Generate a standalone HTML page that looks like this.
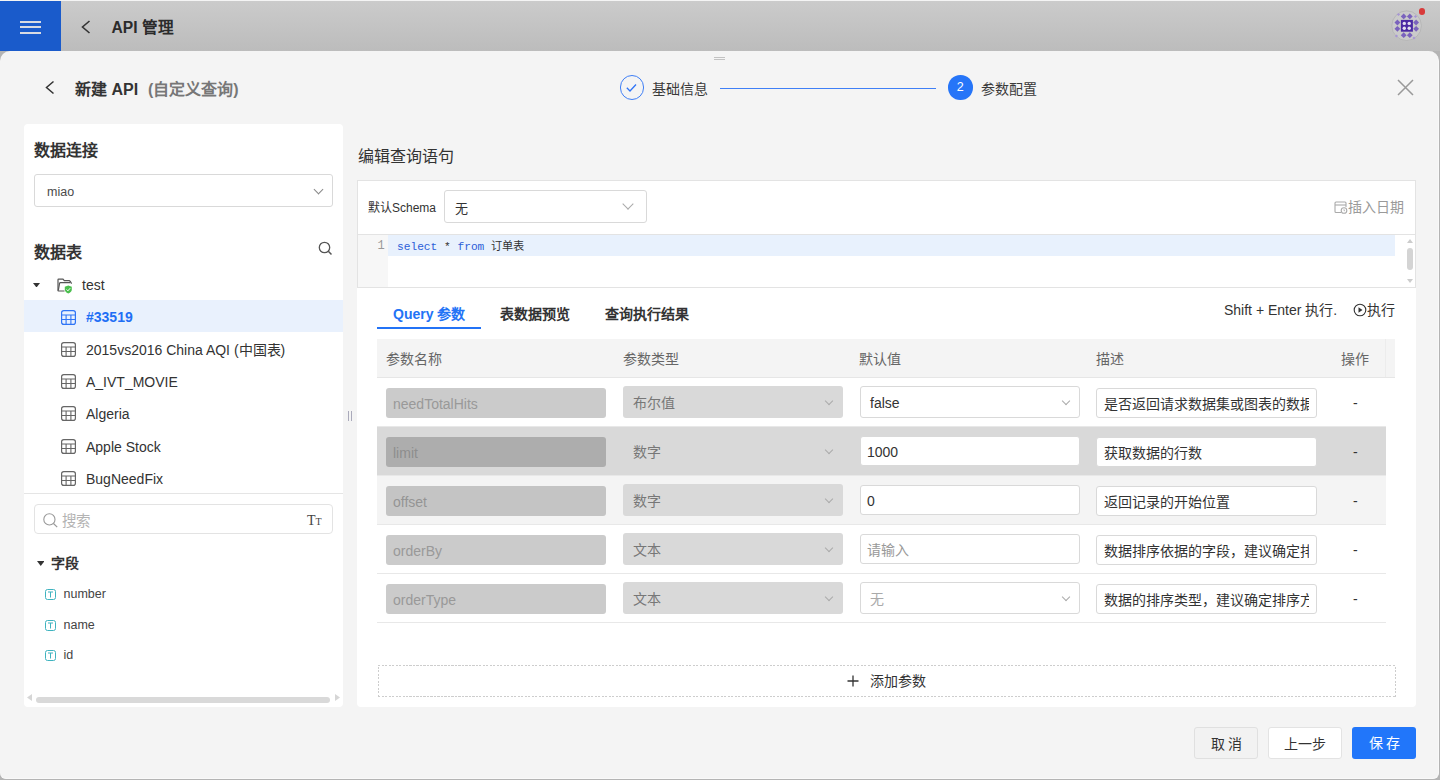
<!DOCTYPE html>
<html lang="zh-CN"><head><meta charset="utf-8">
<style>
*{box-sizing:border-box;margin:0;padding:0}
html,body{width:1440px;height:780px;overflow:hidden}
body{position:relative;background:#b4b4b4;font-family:"Liberation Sans",sans-serif;color:#333;font-size:14px}
.a{position:absolute;white-space:nowrap}
#hdr{position:absolute;left:0;top:0;width:1440px;height:51px;background:linear-gradient(#cbcbcb,#bcbcbc);border-top:1px solid #f4f4f4}
#menu{position:absolute;left:0;top:0;width:61px;height:50px;background:#1a5bcb}
#menu i{position:absolute;left:20px;width:21px;height:2px;background:#d8dbe3}
#modal{position:absolute;left:0;top:51px;width:1439px;height:728px;background:#f4f4f4;border-radius:10px 10px 6px 6px;border-right:1px solid #f9f9f9;border-bottom:1px solid #f9f9f9}
.card{position:absolute;background:#fff;border-radius:4px}
.t16b{font-size:16px;font-weight:bold;line-height:20px}
.sel{position:absolute;border:1px solid #d9d9d9;border-radius:3px;background:#fff}
.chev{position:absolute;width:7px;height:7px;border-right:1.3px solid #888;border-bottom:1.3px solid #888;transform:rotate(45deg)}
.tbl-ico{position:absolute;width:14px;height:14px}
.row{position:absolute;left:378px;width:1008px;height:49px;border-bottom:1px solid #e8e8e8}
.inp{position:absolute;height:30px;border-radius:3px;font-size:14px;line-height:28px;padding-left:7px;border:1px solid #d9d9d9;background:#fff;color:#333;overflow:hidden}
</style></head><body>
<div id="hdr">
  <div id="menu"><i style="top:20px"></i><i style="top:25px"></i><i style="top:31px"></i></div>
  <svg class="a" style="left:80px;top:19px" width="12" height="14" viewBox="0 0 12 14"><path d="M9.5 1 L2.5 7 L9.5 13" fill="none" stroke="#333" stroke-width="1.6"/></svg>
  <div class="a" style="left:111.5px;top:16.5px;font-size:15.6px;font-weight:bold;line-height:20px;color:#2b2b2b">API 管理</div>
  <svg class="a" style="left:1391px;top:9px" width="32" height="32" viewBox="0 0 32 32"><circle cx="15.6" cy="15.7" r="14.8" fill="#cacaca" stroke="#b3b3b3" stroke-width="0.8"/><path d="M12.7 3.5 l2.9 2.9 l-2.9 2.9 l-2.9 -2.9 Z" fill="#7a62bd"/><path d="M18.8 3.5 l2.9 2.9 l-2.9 2.9 l-2.9 -2.9 Z" fill="#7a62bd"/><path d="M6.4 9.6 l2.9 2.9 l-2.9 2.9 l-2.9 -2.9 Z" fill="#7a62bd"/><path d="M6.4 15.9 l2.9 2.9 l-2.9 2.9 l-2.9 -2.9 Z" fill="#7a62bd"/><path d="M25.1 9.6 l2.9 2.9 l-2.9 2.9 l-2.9 -2.9 Z" fill="#7a62bd"/><path d="M25.1 15.9 l2.9 2.9 l-2.9 2.9 l-2.9 -2.9 Z" fill="#7a62bd"/><path d="M12.7 22.3 l2.9 2.9 l-2.9 2.9 l-2.9 -2.9 Z" fill="#7a62bd"/><path d="M18.8 22.3 l2.9 2.9 l-2.9 2.9 l-2.9 -2.9 Z" fill="#7a62bd"/><path d="M7.5 2.9 l1.6 1.6 l-1.6 1.6 l-1.6 -1.6 Z" fill="#a796d4"/><path d="M24.5 4.9 l1.6 1.6 l-1.6 1.6 l-1.6 -1.6 Z" fill="#a796d4"/><path d="M5.5 24.4 l1.6 1.6 l-1.6 1.6 l-1.6 -1.6 Z" fill="#a796d4"/><path d="M23.0 26.4 l1.6 1.6 l-1.6 1.6 l-1.6 -1.6 Z" fill="#a796d4"/><rect x="9.9" y="9.9" width="12" height="11.8" fill="#4b2aa3"/><circle cx="13.3" cy="13.4" r="1.7" fill="#e4e0f0"/><circle cx="18.2" cy="13.4" r="1.7" fill="#e4e0f0"/><circle cx="13.3" cy="18.3" r="1.7" fill="#e4e0f0"/><circle cx="18.2" cy="18.3" r="1.7" fill="#e4e0f0"/></svg><div class="a" style="left:1418.6px;top:7.4px;width:6.6px;height:6.6px;border-radius:50%;background:#d83a3a"></div>
</div><div id="modal">
  <div class="a" style="left:714px;top:5.5px;width:11px;height:1.2px;background:#c2c2c2"></div>
  <div class="a" style="left:714px;top:8px;width:11px;height:1.2px;background:#c2c2c2"></div>
  <svg class="a" style="left:44px;top:29px" width="12" height="15" viewBox="0 0 12 15"><path d="M9.5 1.5 L2.5 7.5 L9.5 13.5" fill="none" stroke="#333" stroke-width="1.5"/></svg>
  <div class="a t16b" style="left:75px;top:28.5px;color:#333">新建 API</div>
  <div class="a t16b" style="left:148px;top:28.5px;color:#777">(自定义查询)</div>
  <div class="a" style="left:619.5px;top:24px;width:24.5px;height:24.5px;border-radius:50%;border:1px solid #3f7ff6"></div>
  <svg class="a" style="left:619px;top:24px" width="25" height="25" viewBox="0 0 25 25"><path d="M7.8 12.8 L11 16 L17 9.5" fill="none" stroke="#2f74f6" stroke-width="1.3"/></svg>
  <div class="a" style="left:652px;top:28px;font-size:14px;line-height:20px;color:#3a3a3a">基础信息</div>
  <div class="a" style="left:720px;top:36.5px;width:216px;height:1.5px;background:#3f7ff6"></div>
  <div class="a" style="left:948px;top:24px;width:24.5px;height:24.5px;border-radius:50%;background:#2675f8;color:#fff;font-size:12.5px;line-height:25px;text-align:center">2</div>
  <div class="a" style="left:981px;top:28px;font-size:14px;line-height:20px;color:#3a3a3a">参数配置</div>
  <svg class="a" style="left:1397px;top:28px" width="17" height="17" viewBox="0 0 17 17"><path d="M1 1 L16 16 M16 1 L1 16" fill="none" stroke="#999" stroke-width="1.5"/></svg>
  <div class="card" style="left:24px;top:73px;width:319px;height:583px;overflow:hidden">
    <div class="a t16b" style="left:10px;top:17px;color:#333">数据连接</div>
    <div class="sel" style="left:10px;top:50px;width:299px;height:33px"></div>
    <div class="a" style="left:23px;top:59px;font-size:12.5px;line-height:18px;color:#4a4a4a">miao</div>
    <div class="chev" style="left:291px;top:62px"></div>
    <div class="a t16b" style="left:10px;top:119px;color:#333">数据表</div>
    <svg class="a" style="left:294px;top:117px" width="16" height="16" viewBox="0 0 16 16"><circle cx="6.5" cy="6.5" r="5.2" fill="none" stroke="#555" stroke-width="1.3"/><path d="M10.3 10.3 L13.5 13.5" stroke="#555" stroke-width="1.5"/></svg>
    <svg class="a" style="left:9.2px;top:158.8px" width="7" height="4.5" viewBox="0 0 7 4.5"><path d="M0 0 L7 0 L3.5 4.5 Z" fill="#333"/></svg>
    <svg class="a" style="left:33px;top:154px" width="16" height="16" viewBox="0 0 16 16"><path d="M1 4 V12.5 Q1 13 1.5 13 H7.5 M1 4 V1.8 Q1 1.2 1.6 1.2 H6 L7.3 2.6 H12 Q12.8 2.6 13.2 3.4 L14.6 5.6" fill="none" stroke="#555" stroke-width="1.2"/><path d="M1.3 12.5 L2.6 5.2 Q2.8 4.6 3.4 4.6 H13" fill="none" stroke="#555" stroke-width="1.2"/><path d="M11.3 7.6 L14.8 8.8 V11.8 Q14.8 14 11.3 15.6 Q7.8 14 7.8 11.8 V8.8 Z" fill="#4cbf4f"/><path d="M9.6 11.5 L10.9 12.8 L13.2 10.2" fill="none" stroke="#fff" stroke-width="1"/></svg>
    <div class="a" style="left:58px;top:151px;font-size:14px;line-height:20px;color:#333">test</div>
    <div class="a" style="left:0;top:176px;width:319px;height:32px;background:#e9f1fd"></div>
    <svg class="tbl-ico" style="left:37px;top:186px;width:15px;height:15px" width="15" height="15" viewBox="0 0 15 15"><rect x="0.6" y="0.6" width="13.8" height="13.8" rx="2.2" fill="none" stroke="#2f74f6" stroke-width="1.2"/><path d="M0.6 5 H14.4 M0.6 9.5 H14.4 M5.1 5 V14.4 M9.9 5 V14.4" stroke="#2f74f6" stroke-width="1.1"/></svg><div class="a" style="left:62px;top:183px;font-size:14px;line-height:20px;color:#1f6ff5;font-weight:bold">#33519</div>
<svg class="tbl-ico" style="left:37px;top:218px;width:15px;height:15px" width="15" height="15" viewBox="0 0 15 15"><rect x="0.6" y="0.6" width="13.8" height="13.8" rx="2.2" fill="none" stroke="#666" stroke-width="1.2"/><path d="M0.6 5 H14.4 M0.6 9.5 H14.4 M5.1 5 V14.4 M9.9 5 V14.4" stroke="#666" stroke-width="1.1"/></svg><div class="a" style="left:62px;top:216px;font-size:14px;line-height:20px;color:#333">2015vs2016 China AQI (中国表)</div>
<svg class="tbl-ico" style="left:37px;top:250px;width:15px;height:15px" width="15" height="15" viewBox="0 0 15 15"><rect x="0.6" y="0.6" width="13.8" height="13.8" rx="2.2" fill="none" stroke="#666" stroke-width="1.2"/><path d="M0.6 5 H14.4 M0.6 9.5 H14.4 M5.1 5 V14.4 M9.9 5 V14.4" stroke="#666" stroke-width="1.1"/></svg><div class="a" style="left:62px;top:248px;font-size:14px;line-height:20px;color:#333">A_IVT_MOVIE</div>
<svg class="tbl-ico" style="left:37px;top:282px;width:15px;height:15px" width="15" height="15" viewBox="0 0 15 15"><rect x="0.6" y="0.6" width="13.8" height="13.8" rx="2.2" fill="none" stroke="#666" stroke-width="1.2"/><path d="M0.6 5 H14.4 M0.6 9.5 H14.4 M5.1 5 V14.4 M9.9 5 V14.4" stroke="#666" stroke-width="1.1"/></svg><div class="a" style="left:62px;top:280px;font-size:14px;line-height:20px;color:#333">Algeria</div>
<svg class="tbl-ico" style="left:37px;top:315px;width:15px;height:15px" width="15" height="15" viewBox="0 0 15 15"><rect x="0.6" y="0.6" width="13.8" height="13.8" rx="2.2" fill="none" stroke="#666" stroke-width="1.2"/><path d="M0.6 5 H14.4 M0.6 9.5 H14.4 M5.1 5 V14.4 M9.9 5 V14.4" stroke="#666" stroke-width="1.1"/></svg><div class="a" style="left:62px;top:313px;font-size:14px;line-height:20px;color:#333">Apple Stock</div>
<svg class="tbl-ico" style="left:37px;top:347px;width:15px;height:15px" width="15" height="15" viewBox="0 0 15 15"><rect x="0.6" y="0.6" width="13.8" height="13.8" rx="2.2" fill="none" stroke="#666" stroke-width="1.2"/><path d="M0.6 5 H14.4 M0.6 9.5 H14.4 M5.1 5 V14.4 M9.9 5 V14.4" stroke="#666" stroke-width="1.1"/></svg><div class="a" style="left:62px;top:345px;font-size:14px;line-height:20px;color:#333">BugNeedFix</div>
<div class="a" style="left:0;top:369px;width:319px;height:1px;background:#e5e5e5"></div>
    <div class="sel" style="left:10px;top:380px;width:299px;height:30px;border-color:#e3e3e3;border-radius:4px"></div>
    <svg class="a" style="left:19px;top:389px" width="15" height="15" viewBox="0 0 15 15"><circle cx="6.4" cy="6.4" r="5.6" fill="none" stroke="#999" stroke-width="1.1"/><path d="M10.5 10.5 L14.2 14.2" stroke="#999" stroke-width="1.2"/></svg>
    <div class="a" style="left:38px;top:386.5px;font-size:14.5px;line-height:20px;color:#b3b3b3">搜索</div>
    <div class="a" style="left:283px;top:389px;font-family:'Liberation Serif',serif;font-size:14px;line-height:16px;color:#444">T<span style="font-size:10px">T</span></div>
    <svg class="a" style="left:12.5px;top:436.5px" width="7.5" height="5" viewBox="0 0 7.5 5"><path d="M0 0 L7.5 0 L3.75 5 Z" fill="#333"/></svg>
    <div class="a" style="left:26.5px;top:428.7px;font-size:14px;font-weight:bold;line-height:20px;color:#333">字段</div>
    <svg class="a" style="left:21px;top:465px" width="11" height="11" viewBox="0 0 11 11"><rect x="0.5" y="0.5" width="10" height="10" rx="2" fill="none" stroke="#3fb3bf" stroke-width="1"/><path d="M3 3 H8 M5.5 3 V8.5" stroke="#3fb3bf" stroke-width="1"/></svg><div class="a" style="left:39.5px;top:460.5px;font-size:12.5px;line-height:18px;color:#444">number</div>
<svg class="a" style="left:21px;top:496px" width="11" height="11" viewBox="0 0 11 11"><rect x="0.5" y="0.5" width="10" height="10" rx="2" fill="none" stroke="#3fb3bf" stroke-width="1"/><path d="M3 3 H8 M5.5 3 V8.5" stroke="#3fb3bf" stroke-width="1"/></svg><div class="a" style="left:39.5px;top:491.5px;font-size:12.5px;line-height:18px;color:#444">name</div>
<svg class="a" style="left:21px;top:526px" width="11" height="11" viewBox="0 0 11 11"><rect x="0.5" y="0.5" width="10" height="10" rx="2" fill="none" stroke="#3fb3bf" stroke-width="1"/><path d="M3 3 H8 M5.5 3 V8.5" stroke="#3fb3bf" stroke-width="1"/></svg><div class="a" style="left:39.5px;top:521.5px;font-size:12.5px;line-height:18px;color:#444">id</div>
<svg class="a" style="left:3px;top:570px" width="6" height="7" viewBox="0 0 6 7"><path d="M5 0 V7 L0 3.5 Z" fill="#d6d6d6"/></svg>
    <div class="a" style="left:12px;top:573px;width:294px;height:6px;border-radius:3px;background:#d9d9d9"></div>
    <svg class="a" style="left:311px;top:570px" width="6" height="7" viewBox="0 0 6 7"><path d="M0 0 V7 L5 3.5 Z" fill="#d6d6d6"/></svg>
  </div>
  <div class="a" style="left:348px;top:360px;width:1px;height:10px;background:#aab"></div>
  <div class="a" style="left:351px;top:360px;width:1px;height:10px;background:#aab"></div>
  <div class="a" style="left:358px;top:95px;font-size:16px;line-height:22px;color:#333">编辑查询语句</div><div class="card" style="left:357px;top:129px;width:1059px;height:527px"></div><div class="a" style="left:357px;top:129px;width:1059px;height:108px;border:1px solid #e3e3e3;background:#fff"></div><div class="a" style="left:358px;top:183px;width:1057px;height:1px;background:#e3e3e3"></div><div class="a" style="left:368px;top:149px;font-size:12px;line-height:16px;color:#333">默认Schema</div><div class="sel" style="left:444px;top:139px;width:203px;height:33px"></div><div class="a" style="left:455px;top:148.5px;font-size:13px;line-height:18px;color:#333">无</div><div class="chev" style="left:624px;top:149px;width:8px;height:8px;border-color:#aaa;border-width:0 1px 1px 0"></div><svg class="a" style="left:1334px;top:149px" width="14" height="14" viewBox="0 0 14 14"><path d="M7 12.5 H2 Q1 12.5 1 11.5 V3 Q1 2 2 2 H11 Q12 2 12 3 V7" fill="none" stroke="#aaa" stroke-width="1.1"/><path d="M1 5 H12" stroke="#aaa" stroke-width="1.1"/><circle cx="10" cy="10.5" r="2.8" fill="#fff" stroke="#aaa" stroke-width="1.1"/><path d="M10 9.2 V10.7 H11" fill="none" stroke="#aaa" stroke-width="0.8"/></svg><div class="a" style="left:1348px;top:146px;font-size:14px;line-height:20px;color:#9a9a9a">插入日期</div><div class="a" style="left:358px;top:184px;width:30px;height:52px;background:#f7f7f7"></div><div class="a" style="left:388px;top:184px;width:1007px;height:21px;background:#e8f1fd"></div><div class="a" style="left:377.5px;top:187px;font-family:'Liberation Mono',monospace;font-size:12px;line-height:16px;color:#999">1</div><div class="a" style="left:397px;top:187.5px;font-family:'Liberation Mono',monospace;font-size:11.2px;line-height:16px;color:#333"><span style="color:#2c5fd8">select</span> * <span style="color:#2c5fd8">from</span> 订单表</div><svg class="a" style="left:1406px;top:184px" width="8" height="50" viewBox="0 0 8 50"><path d="M1 8 L4 4 L7 8 Z" fill="#ccc"/><rect x="1" y="13" width="6" height="22" rx="3" fill="#d4d4d4"/><path d="M1 44 L4 48 L7 44 Z" fill="#ccc"/></svg><div class="a" style="left:377px;top:276px;width:104px;height:2px;background:#2373f6"></div><div class="a" style="left:393px;top:253px;font-size:14px;font-weight:bold;line-height:20px;color:#2373f6">Query 参数</div><div class="a" style="left:500px;top:253px;font-size:14px;font-weight:bold;line-height:20px;color:#333">表数据预览</div><div class="a" style="left:605px;top:253px;font-size:14px;font-weight:bold;line-height:20px;color:#333">查询执行结果</div><div class="a" style="left:1224px;top:249px;font-size:14px;line-height:20px;color:#333">Shift + Enter 执行.</div><svg class="a" style="left:1353px;top:252px" width="14" height="14" viewBox="0 0 14 14"><circle cx="7" cy="7" r="5.8" fill="none" stroke="#333" stroke-width="1.1"/><path d="M5.5 4.3 L9.5 7 L5.5 9.7 Z" fill="#333"/></svg><div class="a" style="left:1367px;top:249px;font-size:14px;line-height:20px;color:#333">执行</div><div class="a" style="left:377px;top:288px;width:1018px;height:39px;background:#f4f4f4;border-bottom:1px solid #e6e6e6"></div><div class="a" style="left:1385px;top:288px;width:1px;height:38px;background:#ececec"></div><div class="a" style="left:386px;top:298px;font-size:14px;line-height:20px;color:#666">参数名称</div><div class="a" style="left:623px;top:298px;font-size:14px;line-height:20px;color:#666">参数类型</div><div class="a" style="left:859px;top:298px;font-size:14px;line-height:20px;color:#666">默认值</div><div class="a" style="left:1096px;top:298px;font-size:14px;line-height:20px;color:#666">描述</div><div class="a" style="left:1341px;top:298px;font-size:14px;line-height:20px;color:#666">操作</div><div class="a" style="left:377px;top:327px;width:1009px;height:49px;background:#fff;border-bottom:1px solid #e8e8e8"></div><div class="a" style="left:386px;top:337px;width:220px;height:30px;border-radius:3px;background:#cbcbcb"></div><div class="a" style="left:393px;top:343px;font-size:14px;line-height:20px;color:#999">needTotalHits</div><div class="a" style="left:623px;top:335px;width:220px;height:32px;border-radius:3px;background:#d9d9d9"></div><div class="a" style="left:633px;top:341.5px;font-size:14px;line-height:20px;color:#777">布尔值</div><div class="chev" style="left:826px;top:347px;width:6px;height:6px;border-color:#aaa;border-width:0 1px 1px 0"></div><div class="sel" style="left:860px;top:335px;width:220px;height:32px"></div><div class="a" style="left:870px;top:342px;font-size:14px;line-height:20px;color:#333">false</div><div class="chev" style="left:1063px;top:347px;width:6px;height:6px;border-color:#aaa;border-width:0 1px 1px 0"></div><div class="sel" style="left:1096px;top:337px;width:221px;height:30px;overflow:hidden;padding-right:7px"><div style="position:absolute;left:7px;right:7px;top:5px;overflow:hidden;white-space:nowrap;font-size:14px;line-height:20px;color:#333">是否返回请求数据集或图表的数据总条数</div></div><div class="a" style="left:1353px;top:342px;font-size:14px;line-height:20px;color:#333">-</div><div class="a" style="left:377px;top:376px;width:1009px;height:49px;background:#d9d9d9;border-bottom:1px solid #e8e8e8"></div><div class="a" style="left:386px;top:386px;width:220px;height:30px;border-radius:3px;background:#adadad"></div><div class="a" style="left:393px;top:392px;font-size:14px;line-height:20px;color:#8e8e8e">limit</div><div class="a" style="left:623px;top:384px;width:220px;height:32px;border-radius:3px;background:#d9d9d9"></div><div class="a" style="left:633px;top:390.5px;font-size:14px;line-height:20px;color:#777">数字</div><div class="chev" style="left:826px;top:396px;width:6px;height:6px;border-color:#aaa;border-width:0 1px 1px 0"></div><div class="sel" style="left:860px;top:385px;width:220px;height:30px"></div><div class="a" style="left:867px;top:391px;font-size:14px;line-height:20px;color:#333">1000</div><div class="sel" style="left:1096px;top:386px;width:221px;height:30px;overflow:hidden;padding-right:7px"><div style="position:absolute;left:7px;right:7px;top:5px;overflow:hidden;white-space:nowrap;font-size:14px;line-height:20px;color:#333">获取数据的行数</div></div><div class="a" style="left:1353px;top:391px;font-size:14px;line-height:20px;color:#333">-</div><div class="a" style="left:377px;top:425px;width:1009px;height:49px;background:#f4f4f4;border-bottom:1px solid #e8e8e8"></div><div class="a" style="left:386px;top:435px;width:220px;height:30px;border-radius:3px;background:#c4c4c4"></div><div class="a" style="left:393px;top:441px;font-size:14px;line-height:20px;color:#949494">offset</div><div class="a" style="left:623px;top:433px;width:220px;height:32px;border-radius:3px;background:#d9d9d9"></div><div class="a" style="left:633px;top:439.5px;font-size:14px;line-height:20px;color:#777">数字</div><div class="chev" style="left:826px;top:445px;width:6px;height:6px;border-color:#aaa;border-width:0 1px 1px 0"></div><div class="sel" style="left:860px;top:434px;width:220px;height:30px"></div><div class="a" style="left:867px;top:440px;font-size:14px;line-height:20px;color:#333">0</div><div class="sel" style="left:1096px;top:435px;width:221px;height:30px;overflow:hidden;padding-right:7px"><div style="position:absolute;left:7px;right:7px;top:5px;overflow:hidden;white-space:nowrap;font-size:14px;line-height:20px;color:#333">返回记录的开始位置</div></div><div class="a" style="left:1353px;top:440px;font-size:14px;line-height:20px;color:#333">-</div><div class="a" style="left:377px;top:474px;width:1009px;height:49px;background:#fff;border-bottom:1px solid #e8e8e8"></div><div class="a" style="left:386px;top:484px;width:220px;height:30px;border-radius:3px;background:#cbcbcb"></div><div class="a" style="left:393px;top:490px;font-size:14px;line-height:20px;color:#999">orderBy</div><div class="a" style="left:623px;top:482px;width:220px;height:32px;border-radius:3px;background:#d9d9d9"></div><div class="a" style="left:633px;top:488.5px;font-size:14px;line-height:20px;color:#777">文本</div><div class="chev" style="left:826px;top:494px;width:6px;height:6px;border-color:#aaa;border-width:0 1px 1px 0"></div><div class="sel" style="left:860px;top:483px;width:220px;height:30px"></div><div class="a" style="left:867px;top:489px;font-size:14px;line-height:20px;color:#999">请输入</div><div class="sel" style="left:1096px;top:484px;width:221px;height:30px;overflow:hidden;padding-right:7px"><div style="position:absolute;left:7px;right:7px;top:5px;overflow:hidden;white-space:nowrap;font-size:14px;line-height:20px;color:#333">数据排序依据的字段，建议确定排序字段</div></div><div class="a" style="left:1353px;top:489px;font-size:14px;line-height:20px;color:#333">-</div><div class="a" style="left:377px;top:523px;width:1009px;height:49px;background:#fff;border-bottom:1px solid #e8e8e8"></div><div class="a" style="left:386px;top:533px;width:220px;height:30px;border-radius:3px;background:#cbcbcb"></div><div class="a" style="left:393px;top:539px;font-size:14px;line-height:20px;color:#999">orderType</div><div class="a" style="left:623px;top:531px;width:220px;height:32px;border-radius:3px;background:#d9d9d9"></div><div class="a" style="left:633px;top:537.5px;font-size:14px;line-height:20px;color:#777">文本</div><div class="chev" style="left:826px;top:543px;width:6px;height:6px;border-color:#aaa;border-width:0 1px 1px 0"></div><div class="sel" style="left:860px;top:531px;width:220px;height:32px"></div><div class="a" style="left:870px;top:538px;font-size:14px;line-height:20px;color:#aaa">无</div><div class="chev" style="left:1063px;top:543px;width:6px;height:6px;border-color:#aaa;border-width:0 1px 1px 0"></div><div class="sel" style="left:1096px;top:533px;width:221px;height:30px;overflow:hidden;padding-right:7px"><div style="position:absolute;left:7px;right:7px;top:5px;overflow:hidden;white-space:nowrap;font-size:14px;line-height:20px;color:#333">数据的排序类型，建议确定排序方式</div></div><div class="a" style="left:1353px;top:538px;font-size:14px;line-height:20px;color:#333">-</div><div class="a" style="left:378px;top:614px;width:1018px;height:32px;background:repeating-linear-gradient(90deg,#cdcdcd 0 2px,transparent 2px 3.5px) top/100% 1px no-repeat,repeating-linear-gradient(90deg,#cdcdcd 0 2px,transparent 2px 3.5px) bottom/100% 1px no-repeat,repeating-linear-gradient(0deg,#cdcdcd 0 2px,transparent 2px 3.5px) left/1px 100% no-repeat,repeating-linear-gradient(0deg,#cdcdcd 0 2px,transparent 2px 3.5px) right/1px 100% no-repeat"></div><svg class="a" style="left:847px;top:624px" width="12" height="12" viewBox="0 0 12 12"><path d="M6 0.5 V11.5 M0.5 6 H11.5" stroke="#333" stroke-width="1.3"/></svg><div class="a" style="left:870px;top:620px;font-size:14px;line-height:20px;color:#333">添加参数</div><div class="a" style="left:1194px;top:676px;width:64px;height:32px;border:1px solid #e0e0e0;border-radius:3px;background:#f2f2f2;font-size:14px;line-height:30px;padding-top:1px;text-align:center;color:#333;letter-spacing:3px;padding-left:3px">取消</div><div class="a" style="left:1268px;top:676px;width:74px;height:32px;border:1px solid #e3e3e3;border-radius:3px;background:#fff;font-size:14px;line-height:30px;padding-top:1px;text-align:center;color:#333">上一步</div><div class="a" style="left:1352px;top:676px;width:64px;height:32px;border-radius:3px;background:#2176fa;font-size:14px;line-height:31px;padding-top:1px;text-align:center;color:#fff;letter-spacing:3px;padding-left:3px">保存</div></div></body></html>
